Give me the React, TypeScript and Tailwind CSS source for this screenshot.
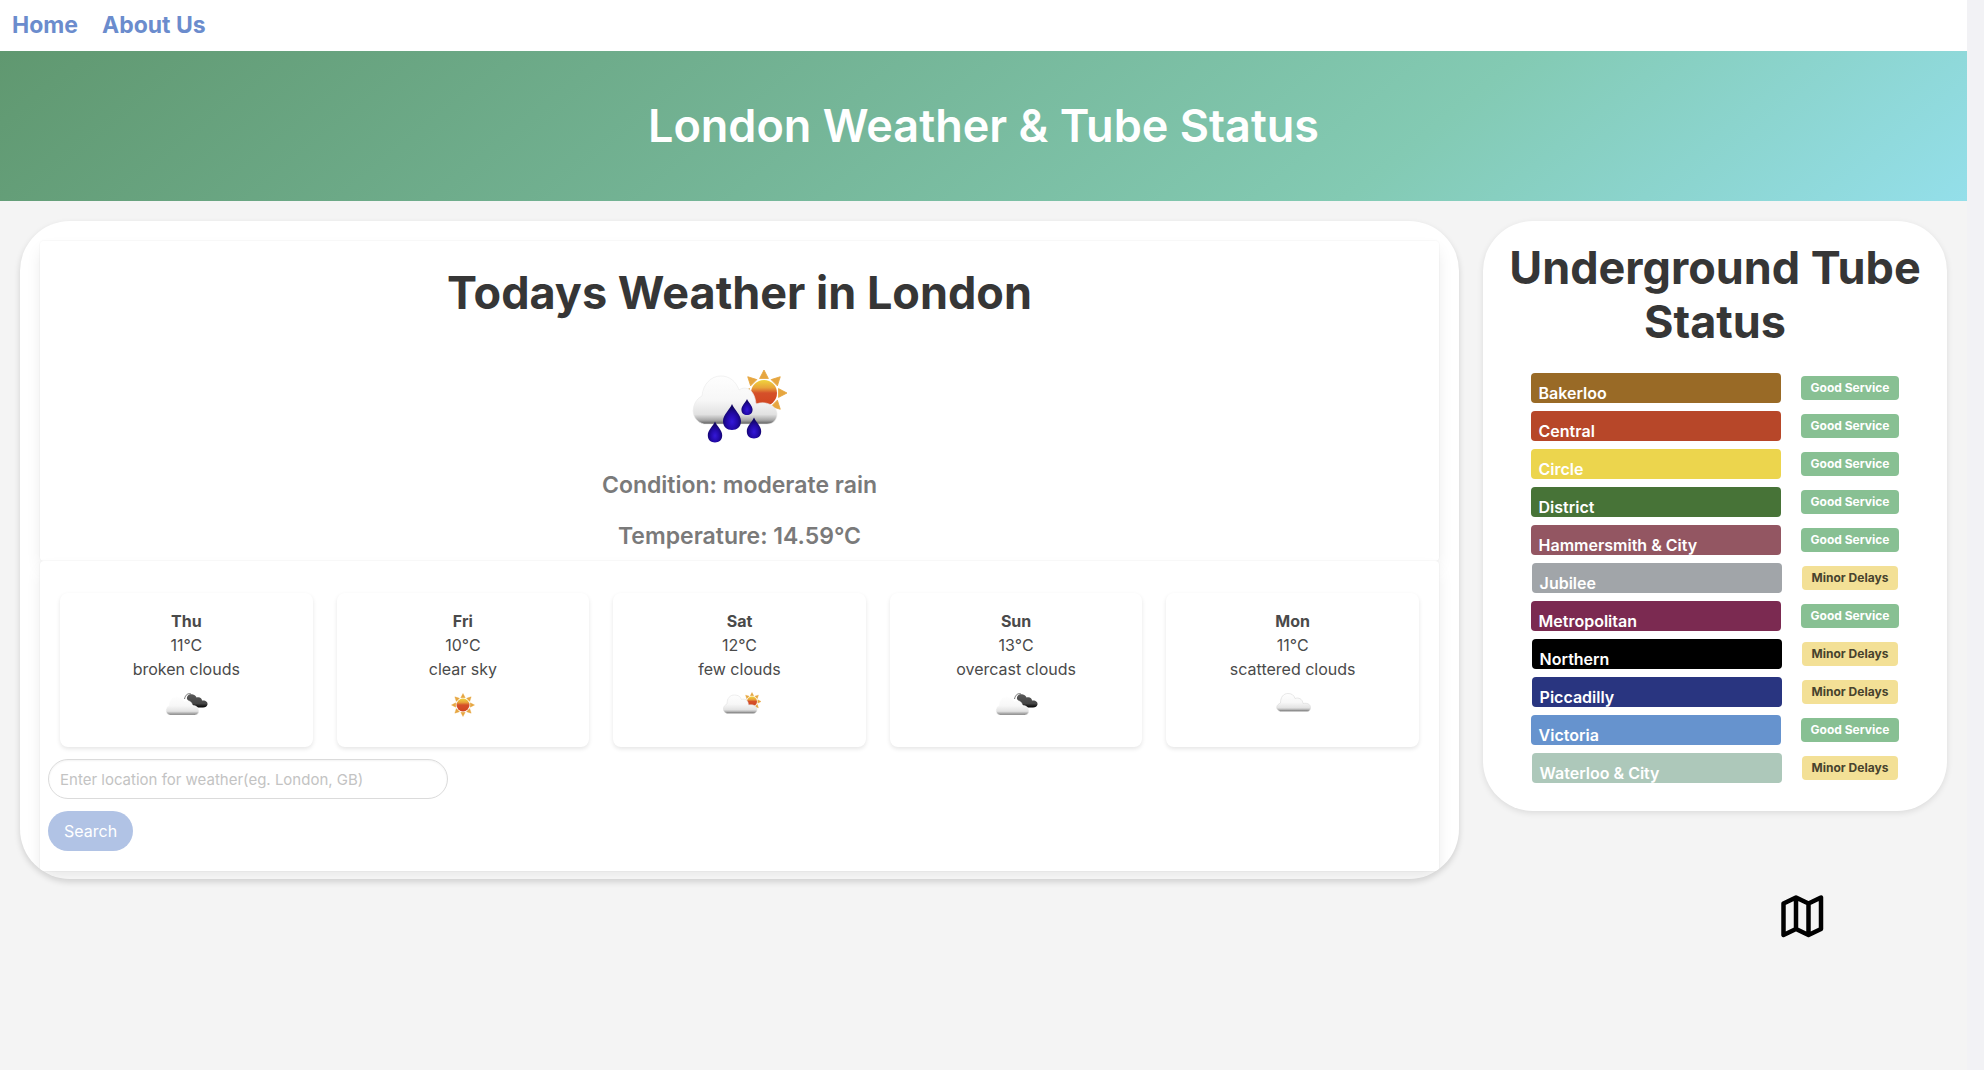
import React from "react";

type Status = "Good Service" | "Minor Delays";

const navLinks = ["Home", "About Us"];

const lines: { name: string; color: string; status: Status }[] = [
  { name: "Bakerloo", color: "bg-[#996a26]", status: "Good Service" },
  { name: "Central", color: "bg-[#b74729]", status: "Good Service" },
  { name: "Circle", color: "bg-[#ecd54d]", status: "Good Service" },
  { name: "District", color: "bg-[#477337]", status: "Good Service" },
  { name: "Hammersmith & City", color: "bg-[#935662]", status: "Good Service" },
  { name: "Jubilee", color: "bg-[#a1a5a9]", status: "Minor Delays" },
  { name: "Metropolitan", color: "bg-[#7b2a51]", status: "Good Service" },
  { name: "Northern", color: "bg-black", status: "Minor Delays" },
  { name: "Piccadilly", color: "bg-[#293580]", status: "Minor Delays" },
  { name: "Victoria", color: "bg-[#6693ce]", status: "Good Service" },
  { name: "Waterloo & City", color: "bg-[#adc8ba]", status: "Minor Delays" },
];

const statusStyle: Record<Status, string> = {
  "Good Service": "bg-[#88c093] text-white",
  "Minor Delays": "bg-[#f3e096] text-[#47432d]",
};

function IconDefs() {
  return (
    <svg width="0" height="0" className="absolute" aria-hidden="true">
      <defs>
        <linearGradient id="sun" x1="0" y1="0" x2="0" y2="1">
          <stop offset="0" stopColor="#f0d43c" />
          <stop offset="0.3" stopColor="#e8a33a" />
          <stop offset="0.5" stopColor="#d5502a" />
          <stop offset="1" stopColor="#d1451f" />
        </linearGradient>
        <linearGradient id="cloud" x1="0" y1="0" x2="0" y2="1">
          <stop offset="0" stopColor="#fefefe" />
          <stop offset="0.5" stopColor="#f7f7f7" />
          <stop offset="0.8" stopColor="#e2e2e2" />
          <stop offset="0.92" stopColor="#a8a8a8" />
          <stop offset="1" stopColor="#5c5c5c" />
        </linearGradient>
        <linearGradient id="dark" x1="0" y1="0" x2="0" y2="1">
          <stop offset="0" stopColor="#5a5a5a" />
          <stop offset="0.7" stopColor="#454545" />
          <stop offset="1" stopColor="#000" />
        </linearGradient>
        <radialGradient id="drop" cx="0.5" cy="0.68" r="0.55">
          <stop offset="0" stopColor="#3418d8" />
          <stop offset="0.55" stopColor="#2209a8" />
          <stop offset="1" stopColor="#110563" />
        </radialGradient>
      </defs>
    </svg>
  );
}

function Sun({ x, y, r, reach }: { x: number; y: number; r: number; reach: number }) {
  return (
    <g transform={`translate(${x} ${y})`}>
      {[0, 45, 90, 135, 180, 225, 270, 315].map((a) => (
        <path
          key={a}
          d={`M${-r * 0.34} ${-r - 1.5} L0 ${-reach} L${r * 0.34} ${-r - 1.5} Z`}
          transform={`rotate(${a})`}
          fill="#e6a640"
          stroke="#e6a640"
          strokeWidth="0.8"
        />
      ))}
      <circle r={r} fill="url(#sun)" />
    </g>
  );
}

const mainCloud =
  "M14 68 C6 66 2 59 3.500 52 C4.500 46 8 42 12 40 C13 28 21 20 31 20 C39 20 46 25 49 34 C56 29 65 34 66 48 C76 44 87 50 87 58 C87 64 83 68 77 68 Z";

function Drop({ x, y, s }: { x: number; y: number; s: number }) {
  return (
    <path
      d="M0 -13 C2 -8 9 -2 9 4 C9 10 5 13 0 13 C-5 13 -9 10 -9 4 C-9 -2 -2 -8 0 -13 Z"
      transform={`translate(${x} ${y}) scale(${s})`}
      fill="url(#drop)"
    />
  );
}

function RainIcon() {
  return (
    <svg viewBox="0 0 100 100" className="size-[100px]" role="img" aria-label="moderate rain">
      <Sun x={74} y={37} r={13} reach={23} />
      <path d={mainCloud} fill="url(#cloud)" stroke="#e9e9e9" strokeWidth="0.6" />
      <Drop x={42} y={61} s={1} />
      <Drop x={57} y={51} s={0.62} />
      <Drop x={25} y={76} s={0.8} />
      <Drop x={64} y={72} s={0.8} />
    </svg>
  );
}

function BrokenClouds() {
  return (
    <svg viewBox="0 0 100 100" className="size-[50px]" aria-hidden="true">
      <path d="M47 36 C49 27 54 24 60 26" fill="none" stroke="#777" strokeWidth="2" />
      <path
        d="M52 36 C51 29 57 25 64 27 C68 28 70 30 71 33 C77 31 82 34 82 39 C89 38 94 42 93 47 C92 51 89 53 84 53 L68 53 C62 47 56 42 52 36 Z"
        fill="url(#dark)"
      />
      <path
        d="M18 68 C12 67 9 62 10 57 C11 53 13 50 16 49 C16 38 23 31 32 31 C39 31 45 35 47 41 C54 37 62 41 63 49 C70 49 76 53 76 60 C76 65 72 68 67 68 Z"
        fill="url(#cloud)"
        stroke="#fff"
        strokeWidth="1"
      />
    </svg>
  );
}

function ClearSky() {
  return (
    <svg viewBox="0 0 100 100" className="size-[50px]" aria-hidden="true">
      <Sun x={50} y={48} r={13} reach={23} />
    </svg>
  );
}

function FewClouds() {
  return (
    <svg viewBox="0 0 100 100" className="size-[50px]" aria-hidden="true">
      <Sun x={76} y={41} r={10} reach={18} />
      <path
        d="M27 65 C21 64 18 59 19 54 C20 50 22 48 26 46 C26 34 32 28 41 28 C48 28 53 31 55 37 C62 34 69 39 69 48 C78 46 86 50 86 57 C86 62 82 65 78 65 Z"
        fill="url(#cloud)"
        stroke="#ddd"
        strokeWidth="1"
      />
    </svg>
  );
}

function ScatteredClouds() {
  return (
    <svg viewBox="0 0 100 100" className="size-[50px]" aria-hidden="true">
      <path
        d="M25 61 C20 60 17 56 17.500 52 C18 48 21 46 25 44 C25 32 31 25 40 25 C47 25 52 28 54 35 C61 32 69 36 70 45 C79 43 85 47 85 53 C85 58 82 61 78 61 Z"
        fill="url(#cloud)"
        stroke="#d8d8d8"
        strokeWidth="1.200"
      />
    </svg>
  );
}

const forecast = [
  { day: "Thu", temp: "11°C", text: "broken clouds", Icon: BrokenClouds },
  { day: "Fri", temp: "10°C", text: "clear sky", Icon: ClearSky },
  { day: "Sat", temp: "12°C", text: "few clouds", Icon: FewClouds },
  { day: "Sun", temp: "13°C", text: "overcast clouds", Icon: BrokenClouds },
  { day: "Mon", temp: "11°C", text: "scattered clouds", Icon: ScatteredClouds },
];

const panelShadow = "shadow-[0_8px_16px_-2px_rgba(10,10,10,0.1),0_0_0_1px_rgba(10,10,10,0.02)]";

export default function App() {
  return (
    <div className="flex min-h-screen bg-[#f4f4f4] font-['Inter',sans-serif] text-[#4a4a4a]">
      <IconDefs />
      <div className="min-w-0 flex-1">
        <nav className="flex h-[51px] items-center gap-6 bg-white px-3 text-[23px] font-bold text-[#6b8ccd]">
          {navLinks.map((label) => (
            <a key={label} href="#">
              {label}
            </a>
          ))}
        </nav>

        <header className="flex h-[150px] items-center justify-center bg-[linear-gradient(141deg,#609870_0%,#83cab3_71%,#94dfea_100%)]">
          <h1 className="text-[45px] leading-[54px] font-semibold text-white">London Weather &amp; Tube Status</h1>
        </header>

        <main className="flex items-start gap-6 p-5">
          <section className="min-w-0 flex-1 overflow-hidden rounded-[50px] bg-white px-5 pt-5 pb-2 shadow-[0_3px_6px_rgba(0,0,0,0.15)]">
            <div className={`flex flex-col items-center rounded bg-white pt-[25px] pb-[10px] ${panelShadow}`}>
              <h2 className="text-[45px] leading-[54px] font-bold text-[#363636]">Todays Weather in London</h2>
              <div className="mt-9 mb-[14px]">
                <RainIcon />
              </div>
              <p className="text-[23px] leading-[30px] font-semibold text-[#7a7a7a]">Condition: moderate rain</p>
              <p className="mt-[21px] text-[23px] leading-[30px] font-semibold text-[#7a7a7a]">Temperature: 14.59°C</p>
            </div>

            <div className={`rounded-t bg-white pt-8 pb-5 ${panelShadow}`}>
              <ul className="grid grid-cols-5 gap-6 px-5">
                {forecast.map(({ day, temp, text, Icon }) => (
                  <li
                    key={day}
                    className="flex flex-col items-center rounded-lg bg-white p-4 leading-6 shadow-[0_2px_4px_rgba(0,0,0,0.1)]"
                  >
                    <strong className="font-bold">{day}</strong>
                    <span>{temp}</span>
                    <span>{text}</span>
                    <Icon />
                  </li>
                ))}
              </ul>
              <form className="mt-3 flex flex-col items-start gap-3 px-2" onSubmit={(e) => e.preventDefault()}>
                <input
                  type="text"
                  aria-label="Location"
                  placeholder="Enter location for weather(eg. London, GB)"
                  className="h-10 w-[400px] rounded-full border border-[#dbdbdb] bg-white px-[11px] text-[15px] shadow-[inset_0_1px_2px_rgba(10,10,10,0.05)] placeholder:text-[#c3c3c3]"
                />
                <button type="submit" className="h-10 rounded-full bg-[#b1c3e5] px-4 text-white">
                  Search
                </button>
              </form>
            </div>
          </section>

          <aside className="flex w-[464px] shrink-0 flex-col">
            <section className="rounded-[50px] bg-white p-5 shadow-[0_2px_6px_rgba(0,0,0,0.1)]">
              <h2 className="mb-6 text-center text-[45px] leading-[54px] font-bold text-[#363636]">
                Underground Tube Status
              </h2>
              <ul>
                {lines.map((line) => (
                  <li key={line.name} className="mb-2 flex items-center justify-center gap-5">
                    <span className={`h-[30px] w-[250px] rounded pt-2 pl-2 leading-6 font-semibold text-white ${line.color}`}>
                      {line.name}
                    </span>
                    <span className={`flex h-6 items-center rounded px-[10px] text-xs font-bold ${statusStyle[line.status]}`}>
                      {line.status}
                    </span>
                  </li>
                ))}
              </ul>
            </section>
            <a href="#" aria-label="Tube map" className="mt-20 mr-[120px] self-end text-black">
              <svg viewBox="0 0 50 50" className="size-[50px]" fill="none" stroke="currentColor" strokeWidth="4.500" strokeLinejoin="round">
                <path d="M6.500 12.500 L19 6.500 L31.500 12.500 L44 6.500 V38 L31.500 44 L19 38 L6.500 44 Z M19 6.500 V38 M31.500 12.500 V44" />
              </svg>
            </a>
          </aside>
        </main>
      </div>
      <div className="w-[17px] shrink-0 bg-[#f2f2f5]" />
    </div>
  );
}
